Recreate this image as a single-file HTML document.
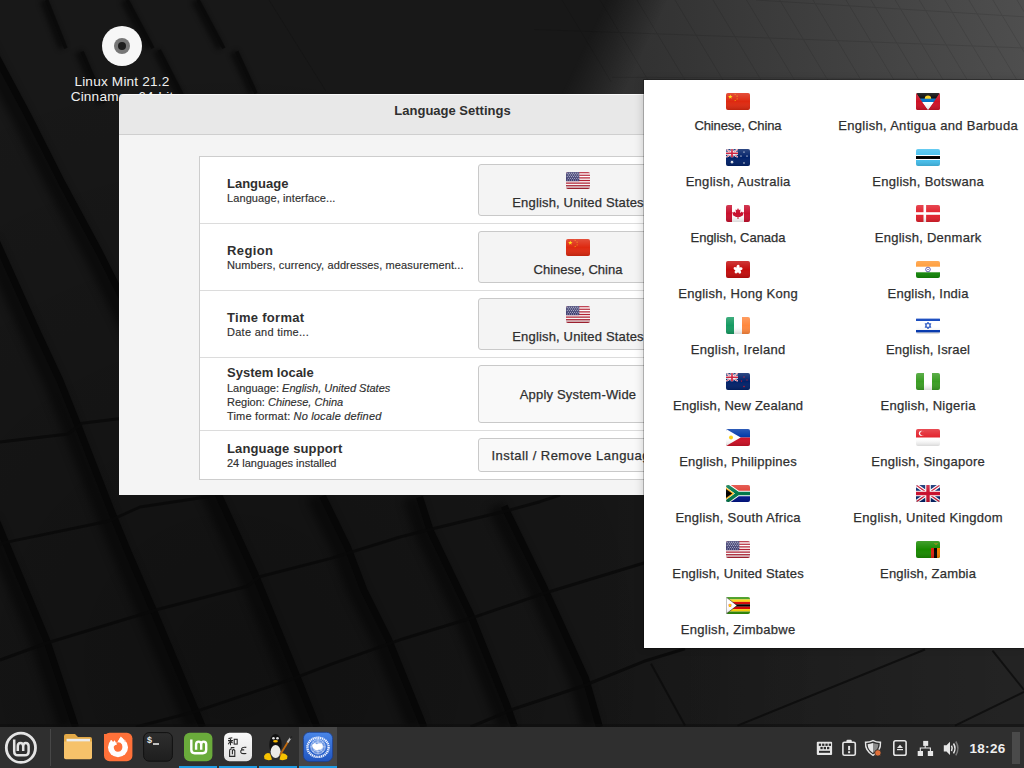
<!DOCTYPE html>
<html><head><meta charset="utf-8">
<style>
*{box-sizing:border-box;margin:0;padding:0}
html,body{width:1024px;height:768px;overflow:hidden;background:#151515;font-family:"Liberation Sans",sans-serif;position:relative}
.abs{position:absolute}
#wall{position:absolute;left:0;top:0;width:1024px;height:768px}
#disc{left:102px;top:26px;width:40px;height:40px;border-radius:50%;background:#f7f7f7}
#disc::before{content:"";position:absolute;left:12px;top:12px;width:16px;height:16px;border-radius:50%;background:#777}
#disc::after{content:"";position:absolute;left:16px;top:16px;width:8px;height:8px;border-radius:50%;background:#1e1e1e}
.dlabel{color:#f0f0f0;font-size:13.6px;letter-spacing:0.2px;line-height:16px;white-space:nowrap;text-align:center;width:140px;left:52px}
#win{left:119px;top:94px;width:667px;height:401px;background:#f4f4f4;border-radius:6px 6px 0 0;overflow:hidden}
#title{left:0;top:0;width:100%;height:41px;background:#e8e8e8;border-bottom:1px solid #cfcfcf;border-top:1px solid #fafafa}
#title span{position:absolute;left:0;width:100%;text-align:center;top:8px;font-weight:bold;font-size:13px;line-height:15px;color:#2f2f2f}
#frame{left:80px;top:62px;width:560px;height:324px;background:#fff;border:1px solid #cdcdcd}
.sep{position:absolute;left:0;width:100%;height:1px;background:#dcdcdc}
.lbl{position:absolute;left:27px;font-weight:bold;font-size:13px;line-height:15px;color:#2f2f2f;white-space:nowrap}
.sub{position:absolute;left:27px;font-size:11px;line-height:13px;color:#2f2f2f;-webkit-text-stroke:0.15px #2f2f2f;white-space:nowrap}
.sub i{font-style:italic}
.btn{position:absolute;left:278px;width:200px;background:#f4f4f4;border:1px solid #c9c9c9;border-radius:3px}
.btn .bt{position:absolute;left:0;width:100%;text-align:center;font-size:13px;line-height:15px;color:#2f2f2f;-webkit-text-stroke:0.25px #2f2f2f;white-space:nowrap}
#popb{left:643px;top:79px;width:382px;height:570px;border:1px solid rgba(0,0,0,0.3);box-shadow:-2px 0 7px rgba(0,0,0,0.12)}
#pop{left:644px;top:80px;width:380px;height:568px;background:#fff;overflow:hidden}
.it{position:absolute;width:190px;height:50px}
.it span{position:absolute;left:0;width:100%;top:25px;font-size:13px;line-height:15px;color:#2f2f2f;-webkit-text-stroke:0.25px #2f2f2f;white-space:nowrap;text-align:center}
#bar{left:0;top:727px;width:1024px;height:41px;background:#2f2f2f}
</style></head><body>
<svg width="0" height="0" style="position:absolute"><defs>
<linearGradient id="shade" x1="0" y1="0" x2="0" y2="1">
<stop offset="0" stop-color="#fff" stop-opacity="0.18"/>
<stop offset="0.5" stop-color="#fff" stop-opacity="0"/>
<stop offset="1" stop-color="#000" stop-opacity="0.15"/>
</linearGradient></defs></svg>
<svg id="wall" width="1024" height="768" viewBox="0 0 1024 768">
<defs>
<linearGradient id="wbase" x1="0" y1="0" x2="1" y2="1"><stop offset="0" stop-color="#171717"/><stop offset="0.5" stop-color="#141414"/><stop offset="1" stop-color="#1f1f1f"/></linearGradient><linearGradient id="wtop" x1="0" y1="0" x2="0" y2="1"><stop offset="0" stop-color="#fff" stop-opacity="0.018"/><stop offset="1" stop-color="#fff" stop-opacity="0"/></linearGradient>
<linearGradient id="wlight" gradientUnits="userSpaceOnUse" x1="560" y1="0" x2="1024" y2="0"><stop offset="0" stop-color="#2c2c2c"/><stop offset="0.3" stop-color="#363636"/><stop offset="1" stop-color="#4e4e4e"/></linearGradient>
<linearGradient id="wmaskg" gradientUnits="userSpaceOnUse" x1="590" y1="34" x2="640" y2="58"><stop offset="0" stop-color="#000"/><stop offset="1" stop-color="#fff"/></linearGradient>
<mask id="wmask"><rect x="0" y="0" width="1024" height="200" fill="url(#wmaskg)"/></mask>
<filter id="blur1"><feGaussianBlur stdDeviation="0.7"/></filter>
<radialGradient id="wdark" gradientUnits="userSpaceOnUse" cx="230" cy="660" r="620"><stop offset="0" stop-color="#000" stop-opacity="0.3"/><stop offset="1" stop-color="#000" stop-opacity="0"/></radialGradient>
<linearGradient id="wright" gradientUnits="userSpaceOnUse" x1="600" y1="0" x2="1024" y2="0"><stop offset="0" stop-color="#fff" stop-opacity="0"/><stop offset="1" stop-color="#fff" stop-opacity="0.05"/></linearGradient>
</defs>
<rect width="1024" height="768" fill="#181818"/>
<rect width="1024" height="768" fill="url(#wdark)"/>
<rect width="1024" height="768" fill="url(#wright)"/>
<rect x="400" y="0" width="624" height="200" fill="url(#wlight)" mask="url(#wmask)"/>
<filter id="blur4" x="-10%" y="-10%" width="120%" height="120%"><feGaussianBlur stdDeviation="4"/></filter>
<g fill="none" stroke="#060606" stroke-linejoin="round" style="filter:blur(4px)" opacity="0.7" transform="translate(-12,0)">
<polyline stroke-width="17" points="0,521 50,640 79,727"/>
<polyline stroke-width="17" points="0,241.6 39.8,330 63.2,380 82,426.8 98.4,469 114.75,511 132,553 158.4,613.9 198.4,709.2 206,727"/>
<polyline stroke-width="17" points="-10,35 0,57 31,114.6 65,182 103,252.5 118.75,283.75 223,497 258.4,574 299.9,675.4 318.3,721.5 320.5,727"/>
<polyline stroke-width="17" points="326,496 351,547 367.3,590 391.9,639.2 426.5,724.8 427,727"/>
<polyline stroke-width="17" points="423,497 433.8,530.8 473.7,613.7 510.5,705.9 518,727"/>
<polyline stroke-width="17" points="507.7,506.3 547.6,587.6 589,678.2 602.9,727"/>
</g>
<filter id="blur2"><feGaussianBlur stdDeviation="1.8"/></filter>
<g fill="none" stroke="#070707" stroke-linejoin="round" style="filter:blur(0.7px)" opacity="1" transform="translate(-3.5,0)">
<polyline stroke-width="7" points="0,521 50,640 79,727"/>
<polyline stroke-width="7" points="0,241.6 39.8,330 63.2,380 82,426.8 98.4,469 114.75,511 132,553 158.4,613.9 198.4,709.2 206,727"/>
<polyline stroke-width="7" points="-10,35 0,57 31,114.6 65,182 103,252.5 118.75,283.75 223,497 258.4,574 299.9,675.4 318.3,721.5 320.5,727"/>
<polyline stroke-width="7" points="326,496 351,547 367.3,590 391.9,639.2 426.5,724.8 427,727"/>
<polyline stroke-width="7" points="423,497 433.8,530.8 473.7,613.7 510.5,705.9 518,727"/>
<polyline stroke-width="7" points="507.7,506.3 547.6,587.6 589,678.2 602.9,727"/>
</g>
<g fill="none" stroke="#070707" style="filter:blur(2.5px)" opacity="0.75" transform="translate(-5,0)">
<polyline stroke-width="8" points="48.3,0 67.7,48.3"/>
<polyline stroke-width="8" points="83.8,51.6 106,103"/>
<polyline stroke-width="8" points="129,0 154.7,48.3"/>
<polyline stroke-width="8" points="161,50 185,96.7"/>
<polyline stroke-width="8" points="199.8,0 225.6,48.3"/>
<polyline stroke-width="8" points="238.5,51.6 257.8,93.5"/>
</g>
<g fill="none" stroke="#0a0a0a" style="filter:blur(0.6px)" opacity="0.9">
<polyline stroke-width="3.5" transform="translate(-1.75,0)" points="48.3,0 67.7,48.3"/>
<polyline stroke-width="3.5" transform="translate(-1.75,0)" points="83.8,51.6 106,103"/>
<polyline stroke-width="3.5" transform="translate(-1.75,0)" points="129,0 154.7,48.3"/>
<polyline stroke-width="3.5" transform="translate(-1.75,0)" points="161,50 185,96.7"/>
<polyline stroke-width="3.5" transform="translate(-1.75,0)" points="199.8,0 225.6,48.3"/>
<polyline stroke-width="3.5" transform="translate(-1.75,0)" points="238.5,51.6 257.8,93.5"/>
<polyline stroke-width="1" opacity="0.25" points="269,0 325.6,90.6"/>
</g>
<g fill="none" stroke="#090909" stroke-linejoin="round" style="filter:blur(0.6px)" opacity="0.8">
<polyline stroke-width="3" points="0,544 9.4,541.6 109,521 140,507 206,497 215,495"/>
<polyline stroke-width="3" points="0,660 46.9,643 158.4,609.3 247.6,586.2 258.4,577 330,558.6 400,537 430.7,529.3 506,511 540,501.7 560,495"/>
<polyline stroke-width="3" points="136,727 198.4,710.7 293.7,678.4 330,664.6 400,639.8 470.6,618.3 547.6,592.2 644,563 660,556"/>
<polyline stroke-width="3" points="470.6,727 513.6,709 583,686 644,661.3 685,648.7"/>
<polyline stroke-width="3" points="0,442 68,433.9 82,423.3 125,418"/>
</g>
<g fill="none" stroke="#0a0a0a" stroke-width="2" opacity="0.75">
<polyline points="737.5,725.6 925,649.5"/>
<polyline points="955,725.6 1024,691.9"/>
<polyline points="651,663.7 685,725.6"/>
<polyline points="992.5,650.6 1024,690"/>
</g>
<g fill="none" stroke="#000" stroke-width="1" opacity="0.1">
<polyline points="534,29.5 690,35 860,41.5 1024,48"/>
<polyline points="612,77.3 800,78 1024,80"/>
<polyline points="756,0 860,6.5 1024,16.8"/>
<line x1="562.0" y1="0" x2="611.2" y2="82"/>
<line x1="600.0" y1="0" x2="649.2" y2="82"/>
<line x1="637.0" y1="0" x2="686.2" y2="82"/>
<line x1="675.0" y1="0" x2="724.2" y2="82"/>
<line x1="713.0" y1="0" x2="762.2" y2="82"/>
<line x1="746.5" y1="0" x2="795.7" y2="82"/>
<line x1="779.7" y1="0" x2="828.9" y2="82"/>
<line x1="813.0" y1="0" x2="862.2" y2="82"/>
<line x1="846.0" y1="0" x2="895.2" y2="82"/>
<line x1="871.0" y1="0" x2="920.2" y2="82"/>
<line x1="895.2" y1="0" x2="944.4" y2="82"/>
<line x1="919.3" y1="0" x2="968.5" y2="82"/>
<line x1="944.9" y1="0" x2="994.1" y2="82"/>
<line x1="968.9" y1="0" x2="1018.1" y2="82"/>
<line x1="992.9" y1="0" x2="1042.1" y2="82"/>
<line x1="1017.0" y1="0" x2="1066.2" y2="82"/>
</g>
<rect x="0" y="724" width="1024" height="3" fill="#0b0b0b" opacity="0.5"/>
</svg>

<div id="disc" class="abs"></div>
<div class="abs dlabel" style="top:74px">Linux Mint 21.2</div>
<div class="abs dlabel" style="top:89px">Cinnamon 64-bit</div>

<div id="win" class="abs">
  <div id="title" class="abs"><span>Language Settings</span></div>
  <div id="frame" class="abs">
    <div class="sep" style="top:66px"></div>
    <div class="sep" style="top:133px"></div>
    <div class="sep" style="top:200px"></div>
    <div class="sep" style="top:273px"></div>

    <div class="lbl" style="top:19px">Language</div>
    <div class="sub" style="top:35px;letter-spacing:0.095px">Language, interface...</div>
    <div class="btn" style="top:7px;height:52px"><svg width="24" height="17" viewBox="0 0 24 17" style="position:absolute;left:87px;top:7px;"><defs><clipPath id="c20"><rect x="0" y="0" width="24" height="17" rx="2"/></clipPath></defs><g clip-path="url(#c20)"><rect width="24" height="17" fill="#fff"/><rect y="0.00" width="24" height="1.31" fill="#b22234"/><rect y="2.62" width="24" height="1.31" fill="#b22234"/><rect y="5.23" width="24" height="1.31" fill="#b22234"/><rect y="7.85" width="24" height="1.31" fill="#b22234"/><rect y="10.46" width="24" height="1.31" fill="#b22234"/><rect y="13.08" width="24" height="1.31" fill="#b22234"/><rect y="15.69" width="24" height="1.31" fill="#b22234"/><rect width="13.3" height="9.2" fill="#3c3b6e"/><rect x="0.80" y="0.80" width="0.9" height="0.9" fill="#c8cce0"/><rect x="2.90" y="0.80" width="0.9" height="0.9" fill="#c8cce0"/><rect x="5.00" y="0.80" width="0.9" height="0.9" fill="#c8cce0"/><rect x="7.10" y="0.80" width="0.9" height="0.9" fill="#c8cce0"/><rect x="9.20" y="0.80" width="0.9" height="0.9" fill="#c8cce0"/><rect x="11.30" y="0.80" width="0.9" height="0.9" fill="#c8cce0"/><rect x="1.85" y="2.50" width="0.9" height="0.9" fill="#c8cce0"/><rect x="3.95" y="2.50" width="0.9" height="0.9" fill="#c8cce0"/><rect x="6.05" y="2.50" width="0.9" height="0.9" fill="#c8cce0"/><rect x="8.15" y="2.50" width="0.9" height="0.9" fill="#c8cce0"/><rect x="10.25" y="2.50" width="0.9" height="0.9" fill="#c8cce0"/><rect x="12.35" y="2.50" width="0.9" height="0.9" fill="#c8cce0"/><rect x="0.80" y="4.20" width="0.9" height="0.9" fill="#c8cce0"/><rect x="2.90" y="4.20" width="0.9" height="0.9" fill="#c8cce0"/><rect x="5.00" y="4.20" width="0.9" height="0.9" fill="#c8cce0"/><rect x="7.10" y="4.20" width="0.9" height="0.9" fill="#c8cce0"/><rect x="9.20" y="4.20" width="0.9" height="0.9" fill="#c8cce0"/><rect x="11.30" y="4.20" width="0.9" height="0.9" fill="#c8cce0"/><rect x="1.85" y="5.90" width="0.9" height="0.9" fill="#c8cce0"/><rect x="3.95" y="5.90" width="0.9" height="0.9" fill="#c8cce0"/><rect x="6.05" y="5.90" width="0.9" height="0.9" fill="#c8cce0"/><rect x="8.15" y="5.90" width="0.9" height="0.9" fill="#c8cce0"/><rect x="10.25" y="5.90" width="0.9" height="0.9" fill="#c8cce0"/><rect x="12.35" y="5.90" width="0.9" height="0.9" fill="#c8cce0"/><rect x="0.80" y="7.60" width="0.9" height="0.9" fill="#c8cce0"/><rect x="2.90" y="7.60" width="0.9" height="0.9" fill="#c8cce0"/><rect x="5.00" y="7.60" width="0.9" height="0.9" fill="#c8cce0"/><rect x="7.10" y="7.60" width="0.9" height="0.9" fill="#c8cce0"/><rect x="9.20" y="7.60" width="0.9" height="0.9" fill="#c8cce0"/><rect x="11.30" y="7.60" width="0.9" height="0.9" fill="#c8cce0"/><rect x="0" y="0" width="24" height="17" fill="url(#shade)"/></g></svg><div class="bt" style="top:30px;letter-spacing:0.16px">English, United States</div></div>

    <div class="lbl" style="top:86px;letter-spacing:0.4px">Region</div>
    <div class="sub" style="top:102px;letter-spacing:0.116px">Numbers, currency, addresses, measurement...</div>
    <div class="btn" style="top:74px;height:52px"><svg width="24" height="17" viewBox="0 0 24 17" style="position:absolute;left:87px;top:7px;"><defs><clipPath id="c21"><rect x="0" y="0" width="24" height="17" rx="2"/></clipPath></defs><g clip-path="url(#c21)"><rect width="24" height="17" fill="#de2910"/><polygon points="4.30,1.50 4.86,3.12 6.58,3.16 5.21,4.20 5.71,5.84 4.30,4.86 2.89,5.84 3.39,4.20 2.02,3.16 3.74,3.12" fill="#ffde00"/><polygon points="9.47,0.65 9.37,1.18 9.83,1.46 9.30,1.52 9.18,2.05 8.95,1.56 8.41,1.61 8.81,1.24 8.60,0.74 9.07,1.00" fill="#ffde00"/><polygon points="11.36,2.40 11.35,2.93 11.85,3.13 11.34,3.28 11.31,3.82 11.00,3.38 10.48,3.52 10.80,3.09 10.51,2.64 11.02,2.81" fill="#ffde00"/><polygon points="11.10,5.15 11.28,5.66 11.81,5.67 11.39,5.99 11.54,6.51 11.10,6.20 10.66,6.51 10.81,5.99 10.39,5.67 10.92,5.66" fill="#ffde00"/><polygon points="8.97,6.86 9.23,7.33 9.76,7.25 9.40,7.64 9.64,8.12 9.15,7.90 8.77,8.27 8.84,7.74 8.36,7.50 8.88,7.39" fill="#ffde00"/><rect x="0" y="0" width="24" height="17" fill="url(#shade)"/></g></svg><div class="bt" style="top:30px">Chinese, China</div></div>

    <div class="lbl" style="top:153px;letter-spacing:0.3px">Time format</div>
    <div class="sub" style="top:169px;letter-spacing:0.27px">Date and time...</div>
    <div class="btn" style="top:141px;height:52px"><svg width="24" height="17" viewBox="0 0 24 17" style="position:absolute;left:87px;top:7px;"><defs><clipPath id="c22"><rect x="0" y="0" width="24" height="17" rx="2"/></clipPath></defs><g clip-path="url(#c22)"><rect width="24" height="17" fill="#fff"/><rect y="0.00" width="24" height="1.31" fill="#b22234"/><rect y="2.62" width="24" height="1.31" fill="#b22234"/><rect y="5.23" width="24" height="1.31" fill="#b22234"/><rect y="7.85" width="24" height="1.31" fill="#b22234"/><rect y="10.46" width="24" height="1.31" fill="#b22234"/><rect y="13.08" width="24" height="1.31" fill="#b22234"/><rect y="15.69" width="24" height="1.31" fill="#b22234"/><rect width="13.3" height="9.2" fill="#3c3b6e"/><rect x="0.80" y="0.80" width="0.9" height="0.9" fill="#c8cce0"/><rect x="2.90" y="0.80" width="0.9" height="0.9" fill="#c8cce0"/><rect x="5.00" y="0.80" width="0.9" height="0.9" fill="#c8cce0"/><rect x="7.10" y="0.80" width="0.9" height="0.9" fill="#c8cce0"/><rect x="9.20" y="0.80" width="0.9" height="0.9" fill="#c8cce0"/><rect x="11.30" y="0.80" width="0.9" height="0.9" fill="#c8cce0"/><rect x="1.85" y="2.50" width="0.9" height="0.9" fill="#c8cce0"/><rect x="3.95" y="2.50" width="0.9" height="0.9" fill="#c8cce0"/><rect x="6.05" y="2.50" width="0.9" height="0.9" fill="#c8cce0"/><rect x="8.15" y="2.50" width="0.9" height="0.9" fill="#c8cce0"/><rect x="10.25" y="2.50" width="0.9" height="0.9" fill="#c8cce0"/><rect x="12.35" y="2.50" width="0.9" height="0.9" fill="#c8cce0"/><rect x="0.80" y="4.20" width="0.9" height="0.9" fill="#c8cce0"/><rect x="2.90" y="4.20" width="0.9" height="0.9" fill="#c8cce0"/><rect x="5.00" y="4.20" width="0.9" height="0.9" fill="#c8cce0"/><rect x="7.10" y="4.20" width="0.9" height="0.9" fill="#c8cce0"/><rect x="9.20" y="4.20" width="0.9" height="0.9" fill="#c8cce0"/><rect x="11.30" y="4.20" width="0.9" height="0.9" fill="#c8cce0"/><rect x="1.85" y="5.90" width="0.9" height="0.9" fill="#c8cce0"/><rect x="3.95" y="5.90" width="0.9" height="0.9" fill="#c8cce0"/><rect x="6.05" y="5.90" width="0.9" height="0.9" fill="#c8cce0"/><rect x="8.15" y="5.90" width="0.9" height="0.9" fill="#c8cce0"/><rect x="10.25" y="5.90" width="0.9" height="0.9" fill="#c8cce0"/><rect x="12.35" y="5.90" width="0.9" height="0.9" fill="#c8cce0"/><rect x="0.80" y="7.60" width="0.9" height="0.9" fill="#c8cce0"/><rect x="2.90" y="7.60" width="0.9" height="0.9" fill="#c8cce0"/><rect x="5.00" y="7.60" width="0.9" height="0.9" fill="#c8cce0"/><rect x="7.10" y="7.60" width="0.9" height="0.9" fill="#c8cce0"/><rect x="9.20" y="7.60" width="0.9" height="0.9" fill="#c8cce0"/><rect x="11.30" y="7.60" width="0.9" height="0.9" fill="#c8cce0"/><rect x="0" y="0" width="24" height="17" fill="url(#shade)"/></g></svg><div class="bt" style="top:30px;letter-spacing:0.16px">English, United States</div></div>

    <div class="lbl" style="top:208px">System locale</div>
    <div class="sub" style="top:225px">Language: <i>English, United States</i></div>
    <div class="sub" style="top:239px">Region: <i>Chinese, China</i></div>
    <div class="sub" style="top:253px;letter-spacing:0.17px">Time format: <i>No locale defined</i></div>
    <div class="btn" style="top:208px;height:58px;background:#f9f9f9"><div class="bt" style="top:21px;letter-spacing:0.18px">Apply System-Wide</div></div>

    <div class="lbl" style="top:284px;letter-spacing:0.13px">Language support</div>
    <div class="sub" style="top:300px">24 languages installed</div>
    <div class="btn" style="top:281px;height:34px;background:#f9f9f9"><div class="bt" style="top:9px;letter-spacing:0.46px">Install / Remove Languages</div></div>
  </div>
</div>

<div id="popb" class="abs"></div>
<div id="pop" class="abs">
<div class="it" style="left:-1px;top:13px"><svg width="24" height="17" viewBox="0 0 24 17" style="position:absolute;left:83px;top:0;"><defs><clipPath id="c1"><rect x="0" y="0" width="24" height="17" rx="2"/></clipPath></defs><g clip-path="url(#c1)"><rect width="24" height="17" fill="#de2910"/><polygon points="4.30,1.50 4.86,3.12 6.58,3.16 5.21,4.20 5.71,5.84 4.30,4.86 2.89,5.84 3.39,4.20 2.02,3.16 3.74,3.12" fill="#ffde00"/><polygon points="9.47,0.65 9.37,1.18 9.83,1.46 9.30,1.52 9.18,2.05 8.95,1.56 8.41,1.61 8.81,1.24 8.60,0.74 9.07,1.00" fill="#ffde00"/><polygon points="11.36,2.40 11.35,2.93 11.85,3.13 11.34,3.28 11.31,3.82 11.00,3.38 10.48,3.52 10.80,3.09 10.51,2.64 11.02,2.81" fill="#ffde00"/><polygon points="11.10,5.15 11.28,5.66 11.81,5.67 11.39,5.99 11.54,6.51 11.10,6.20 10.66,6.51 10.81,5.99 10.39,5.67 10.92,5.66" fill="#ffde00"/><polygon points="8.97,6.86 9.23,7.33 9.76,7.25 9.40,7.64 9.64,8.12 9.15,7.90 8.77,8.27 8.84,7.74 8.36,7.50 8.88,7.39" fill="#ffde00"/><rect x="0" y="0" width="24" height="17" fill="url(#shade)"/></g></svg><span style="letter-spacing:-0.154px;text-indent:-0.154px">Chinese, China</span></div>
<div class="it" style="left:-1px;top:69px"><svg width="24" height="17" viewBox="0 0 24 17" style="position:absolute;left:83px;top:0;"><defs><clipPath id="c2"><rect x="0" y="0" width="24" height="17" rx="2"/></clipPath></defs><g clip-path="url(#c2)"><rect width="24" height="17" fill="#012169"/><svg width="12" height="8.5" viewBox="0 0 24 17"><rect width="24" height="17" fill="#012169"/><path d="M0,0L24,17M24,0L0,17" stroke="#fff" stroke-width="3.6"/><path d="M0,0L24,17M24,0L0,17" stroke="#C8102E" stroke-width="1.3"/><path d="M12.0,0V17M0,8.5H24" stroke="#fff" stroke-width="5.6"/><path d="M12.0,0V17M0,8.5H24" stroke="#C8102E" stroke-width="3.4"/></svg><polygon points="6.00,11.00 6.39,12.19 7.56,11.75 6.88,12.80 7.95,13.45 6.70,13.56 6.87,14.80 6.00,13.90 5.13,14.80 5.30,13.56 4.05,13.45 5.12,12.80 4.44,11.75 5.61,12.19" fill="#fff"/><polygon points="18.00,2.00 18.17,2.64 18.78,2.38 18.39,2.91 18.97,3.22 18.31,3.25 18.43,3.90 18.00,3.40 17.57,3.90 17.69,3.25 17.03,3.22 17.61,2.91 17.22,2.38 17.83,2.64" fill="#fff"/><polygon points="15.00,6.00 15.17,6.64 15.78,6.38 15.39,6.91 15.97,7.22 15.31,7.25 15.43,7.90 15.00,7.40 14.57,7.90 14.69,7.25 14.03,7.22 14.61,6.91 14.22,6.38 14.83,6.64" fill="#fff"/><polygon points="21.00,6.00 21.17,6.64 21.78,6.38 21.39,6.91 21.97,7.22 21.31,7.25 21.43,7.90 21.00,7.40 20.57,7.90 20.69,7.25 20.03,7.22 20.61,6.91 20.22,6.38 20.83,6.64" fill="#fff"/><polygon points="18.00,12.90 18.19,13.60 18.86,13.31 18.43,13.90 19.07,14.24 18.34,14.27 18.48,14.99 18.00,14.44 17.52,14.99 17.66,14.27 16.93,14.24 17.57,13.90 17.14,13.31 17.81,13.60" fill="#fff"/><rect x="0" y="0" width="24" height="17" fill="url(#shade)"/></g></svg><span style="letter-spacing:0.294px;text-indent:0.294px">English, Australia</span></div>
<div class="it" style="left:-1px;top:125px"><svg width="24" height="17" viewBox="0 0 24 17" style="position:absolute;left:83px;top:0;"><defs><clipPath id="c3"><rect x="0" y="0" width="24" height="17" rx="2"/></clipPath></defs><g clip-path="url(#c3)"><rect width="24" height="17" fill="#fff"/><rect width="6" height="17" fill="#c8102e"/><rect x="18" width="6" height="17" fill="#c8102e"/><path d="M12,3 L13,5 L14.5,4.5 L14,8 L16,6.5 L16.5,7.5 L18,7.3 L17,9.5 L17.5,10 L14,12 L12.5,12 L12.5,14 L11.5,14 L11.5,12 L10,12 L6.5,10 L7,9.5 L6,7.3 L7.5,7.5 L8,6.5 L10,8 L9.5,4.5 L11,5 Z" fill="#c8102e"/><rect x="0" y="0" width="24" height="17" fill="url(#shade)"/></g></svg><span style="letter-spacing:-0.036px;text-indent:-0.036px">English, Canada</span></div>
<div class="it" style="left:-1px;top:181px"><svg width="24" height="17" viewBox="0 0 24 17" style="position:absolute;left:83px;top:0;"><defs><clipPath id="c4"><rect x="0" y="0" width="24" height="17" rx="2"/></clipPath></defs><g clip-path="url(#c4)"><rect width="24" height="17" fill="#c40d0d"/><ellipse cx="12.00" cy="6.20" rx="1.6" ry="2.4" transform="rotate(10 12.00 6.20)" fill="#fff"/><ellipse cx="14.19" cy="7.79" rx="1.6" ry="2.4" transform="rotate(82 14.19 7.79)" fill="#fff"/><ellipse cx="13.35" cy="10.36" rx="1.6" ry="2.4" transform="rotate(154 13.35 10.36)" fill="#fff"/><ellipse cx="10.65" cy="10.36" rx="1.6" ry="2.4" transform="rotate(226 10.65 10.36)" fill="#fff"/><ellipse cx="9.81" cy="7.79" rx="1.6" ry="2.4" transform="rotate(298 9.81 7.79)" fill="#fff"/><rect x="0" y="0" width="24" height="17" fill="url(#shade)"/></g></svg><span style="letter-spacing:0.276px;text-indent:0.276px">English, Hong Kong</span></div>
<div class="it" style="left:-1px;top:237px"><svg width="24" height="17" viewBox="0 0 24 17" style="position:absolute;left:83px;top:0;"><defs><clipPath id="c5"><rect x="0" y="0" width="24" height="17" rx="2"/></clipPath></defs><g clip-path="url(#c5)"><rect width="24" height="17" fill="#fff"/><rect width="8" height="17" fill="#169b62"/><rect x="16" width="8" height="17" fill="#ff883e"/><rect x="0" y="0" width="24" height="17" fill="url(#shade)"/></g></svg><span style="letter-spacing:0.333px;text-indent:0.333px">English, Ireland</span></div>
<div class="it" style="left:-1px;top:293px"><svg width="24" height="17" viewBox="0 0 24 17" style="position:absolute;left:83px;top:0;"><defs><clipPath id="c6"><rect x="0" y="0" width="24" height="17" rx="2"/></clipPath></defs><g clip-path="url(#c6)"><rect width="24" height="17" fill="#012169"/><svg width="12" height="8.5" viewBox="0 0 24 17"><rect width="24" height="17" fill="#012169"/><path d="M0,0L24,17M24,0L0,17" stroke="#fff" stroke-width="3.6"/><path d="M0,0L24,17M24,0L0,17" stroke="#C8102E" stroke-width="1.3"/><path d="M12.0,0V17M0,8.5H24" stroke="#fff" stroke-width="5.6"/><path d="M12.0,0V17M0,8.5H24" stroke="#C8102E" stroke-width="3.4"/></svg><polygon points="18.00,2.90 18.26,3.64 19.05,3.66 18.42,4.14 18.65,4.89 18.00,4.44 17.35,4.89 17.58,4.14 16.95,3.66 17.74,3.64" fill="#cc142b"/><polygon points="15.50,6.90 15.76,7.64 16.55,7.66 15.92,8.14 16.15,8.89 15.50,8.44 14.85,8.89 15.08,8.14 14.45,7.66 15.24,7.64" fill="#cc142b"/><polygon points="21.00,6.00 21.24,6.68 21.95,6.69 21.38,7.12 21.59,7.81 21.00,7.40 20.41,7.81 20.62,7.12 20.05,6.69 20.76,6.68" fill="#cc142b"/><polygon points="18.00,12.30 18.28,13.11 19.14,13.13 18.46,13.65 18.71,14.47 18.00,13.98 17.29,14.47 17.54,13.65 16.86,13.13 17.72,13.11" fill="#cc142b"/><rect x="0" y="0" width="24" height="17" fill="url(#shade)"/></g></svg><span style="letter-spacing:0.195px;text-indent:0.195px">English, New Zealand</span></div>
<div class="it" style="left:-1px;top:349px"><svg width="24" height="17" viewBox="0 0 24 17" style="position:absolute;left:83px;top:0;"><defs><clipPath id="c7"><rect x="0" y="0" width="24" height="17" rx="2"/></clipPath></defs><g clip-path="url(#c7)"><rect width="24" height="8.5" fill="#0038a8"/><rect y="8.5" width="24" height="8.5" fill="#ce1126"/><polygon points="0,0 14.7,8.5 0,17" fill="#fff"/><circle cx="5" cy="8.5" r="2" fill="#fcd116"/><rect x="0" y="0" width="24" height="17" fill="url(#shade)"/></g></svg><span style="letter-spacing:0.263px;text-indent:0.263px">English, Philippines</span></div>
<div class="it" style="left:-1px;top:405px"><svg width="24" height="17" viewBox="0 0 24 17" style="position:absolute;left:83px;top:0;"><defs><clipPath id="c8"><rect x="0" y="0" width="24" height="17" rx="2"/></clipPath></defs><g clip-path="url(#c8)"><rect width="24" height="8.5" fill="#e03c31"/><rect y="8.5" width="24" height="8.5" fill="#001489"/><path d="M0,0 L12,8.5 L24,8.5 M0,17 L12,8.5" stroke="#fff" stroke-width="5.5" fill="none"/><path d="M0,0 L12,8.5 L24,8.5 M0,17 L12,8.5" stroke="#007749" stroke-width="3.4" fill="none"/><polygon points="0,2.5 8.2,8.5 0,14.5" fill="#ffb81c"/><polygon points="0,4 6.2,8.5 0,13" fill="#000"/><rect x="0" y="0" width="24" height="17" fill="url(#shade)"/></g></svg><span style="letter-spacing:0.260px;text-indent:0.260px">English, South Africa</span></div>
<div class="it" style="left:-1px;top:461px"><svg width="24" height="17" viewBox="0 0 24 17" style="position:absolute;left:83px;top:0;"><defs><clipPath id="c9"><rect x="0" y="0" width="24" height="17" rx="2"/></clipPath></defs><g clip-path="url(#c9)"><rect width="24" height="17" fill="#fff"/><rect y="0.00" width="24" height="1.31" fill="#b22234"/><rect y="2.62" width="24" height="1.31" fill="#b22234"/><rect y="5.23" width="24" height="1.31" fill="#b22234"/><rect y="7.85" width="24" height="1.31" fill="#b22234"/><rect y="10.46" width="24" height="1.31" fill="#b22234"/><rect y="13.08" width="24" height="1.31" fill="#b22234"/><rect y="15.69" width="24" height="1.31" fill="#b22234"/><rect width="13.3" height="9.2" fill="#3c3b6e"/><rect x="0.80" y="0.80" width="0.9" height="0.9" fill="#c8cce0"/><rect x="2.90" y="0.80" width="0.9" height="0.9" fill="#c8cce0"/><rect x="5.00" y="0.80" width="0.9" height="0.9" fill="#c8cce0"/><rect x="7.10" y="0.80" width="0.9" height="0.9" fill="#c8cce0"/><rect x="9.20" y="0.80" width="0.9" height="0.9" fill="#c8cce0"/><rect x="11.30" y="0.80" width="0.9" height="0.9" fill="#c8cce0"/><rect x="1.85" y="2.50" width="0.9" height="0.9" fill="#c8cce0"/><rect x="3.95" y="2.50" width="0.9" height="0.9" fill="#c8cce0"/><rect x="6.05" y="2.50" width="0.9" height="0.9" fill="#c8cce0"/><rect x="8.15" y="2.50" width="0.9" height="0.9" fill="#c8cce0"/><rect x="10.25" y="2.50" width="0.9" height="0.9" fill="#c8cce0"/><rect x="12.35" y="2.50" width="0.9" height="0.9" fill="#c8cce0"/><rect x="0.80" y="4.20" width="0.9" height="0.9" fill="#c8cce0"/><rect x="2.90" y="4.20" width="0.9" height="0.9" fill="#c8cce0"/><rect x="5.00" y="4.20" width="0.9" height="0.9" fill="#c8cce0"/><rect x="7.10" y="4.20" width="0.9" height="0.9" fill="#c8cce0"/><rect x="9.20" y="4.20" width="0.9" height="0.9" fill="#c8cce0"/><rect x="11.30" y="4.20" width="0.9" height="0.9" fill="#c8cce0"/><rect x="1.85" y="5.90" width="0.9" height="0.9" fill="#c8cce0"/><rect x="3.95" y="5.90" width="0.9" height="0.9" fill="#c8cce0"/><rect x="6.05" y="5.90" width="0.9" height="0.9" fill="#c8cce0"/><rect x="8.15" y="5.90" width="0.9" height="0.9" fill="#c8cce0"/><rect x="10.25" y="5.90" width="0.9" height="0.9" fill="#c8cce0"/><rect x="12.35" y="5.90" width="0.9" height="0.9" fill="#c8cce0"/><rect x="0.80" y="7.60" width="0.9" height="0.9" fill="#c8cce0"/><rect x="2.90" y="7.60" width="0.9" height="0.9" fill="#c8cce0"/><rect x="5.00" y="7.60" width="0.9" height="0.9" fill="#c8cce0"/><rect x="7.10" y="7.60" width="0.9" height="0.9" fill="#c8cce0"/><rect x="9.20" y="7.60" width="0.9" height="0.9" fill="#c8cce0"/><rect x="11.30" y="7.60" width="0.9" height="0.9" fill="#c8cce0"/><rect x="0" y="0" width="24" height="17" fill="url(#shade)"/></g></svg><span style="letter-spacing:0.162px;text-indent:0.162px">English, United States</span></div>
<div class="it" style="left:-1px;top:517px"><svg width="24" height="17" viewBox="0 0 24 17" style="position:absolute;left:83px;top:0;"><defs><clipPath id="c10"><rect x="0" y="0" width="24" height="17" rx="2"/></clipPath></defs><g clip-path="url(#c10)"><rect width="24" height="17" fill="#fff"/><rect y="0.00" width="24" height="2.48" fill="#319208"/><rect y="2.43" width="24" height="2.48" fill="#ffd200"/><rect y="4.86" width="24" height="2.48" fill="#d40000"/><rect y="7.29" width="24" height="2.48" fill="#000"/><rect y="9.71" width="24" height="2.48" fill="#d40000"/><rect y="12.14" width="24" height="2.48" fill="#ffd200"/><rect y="14.57" width="24" height="2.48" fill="#319208"/><polygon points="0,0 11,8.5 0,17" fill="#fff" stroke="#000" stroke-width="0.5"/><polygon points="4.00,6.20 4.54,7.76 6.19,7.79 4.87,8.78 5.35,10.36 4.00,9.42 2.65,10.36 3.13,8.78 1.81,7.79 3.46,7.76" fill="#d40000"/><rect x="3" y="7.3" width="2" height="2.5" fill="#ffd200"/><rect x="0" y="0" width="24" height="17" fill="url(#shade)"/></g></svg><span style="letter-spacing:0.294px;text-indent:0.294px">English, Zimbabwe</span></div>
<div class="it" style="left:189px;top:13px"><svg width="24" height="17" viewBox="0 0 24 17" style="position:absolute;left:83px;top:0;"><defs><clipPath id="c11"><rect x="0" y="0" width="24" height="17" rx="2"/></clipPath></defs><g clip-path="url(#c11)"><rect width="24" height="17" fill="#ce1126"/><polygon points="0,0 24,0 12,17" fill="#000"/><polygon points="4,5.7 20,5.7 12,17" fill="#0072c6"/><polygon points="6.3,9 17.7,9 12,17" fill="#fff"/><circle cx="12" cy="5.7" r="3.2" fill="#fcd116"/><rect x="0" y="5.7" width="24" height="3.3" fill="#0072c6"/><polygon points="0,0 12,17 0,17" fill="#ce1126"/><polygon points="24,0 12,17 24,17" fill="#ce1126"/><polygon points="6.3,9 17.7,9 12,17" fill="#fff"/><rect x="0" y="0" width="24" height="17" fill="url(#shade)"/></g></svg><span style="letter-spacing:0.296px;text-indent:0.296px">English, Antigua and Barbuda</span></div>
<div class="it" style="left:189px;top:69px"><svg width="24" height="17" viewBox="0 0 24 17" style="position:absolute;left:83px;top:0;"><defs><clipPath id="c12"><rect x="0" y="0" width="24" height="17" rx="2"/></clipPath></defs><g clip-path="url(#c12)"><rect width="24" height="17" fill="#45c0ee"/><rect y="6" width="24" height="5" fill="#fff"/><rect y="7" width="24" height="3" fill="#000"/><rect x="0" y="0" width="24" height="17" fill="url(#shade)"/></g></svg><span style="letter-spacing:0.281px;text-indent:0.281px">English, Botswana</span></div>
<div class="it" style="left:189px;top:125px"><svg width="24" height="17" viewBox="0 0 24 17" style="position:absolute;left:83px;top:0;"><defs><clipPath id="c13"><rect x="0" y="0" width="24" height="17" rx="2"/></clipPath></defs><g clip-path="url(#c13)"><rect width="24" height="17" fill="#e2202c"/><rect x="7.5" width="2.6" height="17" fill="#fff"/><rect y="7.2" width="24" height="2.6" fill="#fff"/><rect x="0" y="0" width="24" height="17" fill="url(#shade)"/></g></svg><span style="letter-spacing:0.260px;text-indent:0.260px">English, Denmark</span></div>
<div class="it" style="left:189px;top:181px"><svg width="24" height="17" viewBox="0 0 24 17" style="position:absolute;left:83px;top:0;"><defs><clipPath id="c14"><rect x="0" y="0" width="24" height="17" rx="2"/></clipPath></defs><g clip-path="url(#c14)"><rect width="24" height="17" fill="#fff"/><rect width="24" height="5.7" fill="#ff9933"/><rect y="11.3" width="24" height="5.7" fill="#138808"/><circle cx="12" cy="8.5" r="2.3" fill="none" stroke="#000080" stroke-width="0.6"/><circle cx="12" cy="8.5" r="0.6" fill="#000080"/><rect x="0" y="0" width="24" height="17" fill="url(#shade)"/></g></svg><span style="letter-spacing:0.208px;text-indent:0.208px">English, India</span></div>
<div class="it" style="left:189px;top:237px"><svg width="24" height="17" viewBox="0 0 24 17" style="position:absolute;left:83px;top:0;"><defs><clipPath id="c15"><rect x="0" y="0" width="24" height="17" rx="2"/></clipPath></defs><g clip-path="url(#c15)"><rect width="24" height="17" fill="#fff"/><rect y="1.6" width="24" height="2.4" fill="#0038b8"/><rect y="13" width="24" height="2.4" fill="#0038b8"/><polygon points="12,5 15,10.3 9,10.3" fill="none" stroke="#0038b8" stroke-width="0.7"/><polygon points="12,12 15,6.7 9,6.7" fill="none" stroke="#0038b8" stroke-width="0.7"/><rect x="0" y="0" width="24" height="17" fill="url(#shade)"/></g></svg><span style="letter-spacing:0.171px;text-indent:0.171px">English, Israel</span></div>
<div class="it" style="left:189px;top:293px"><svg width="24" height="17" viewBox="0 0 24 17" style="position:absolute;left:83px;top:0;"><defs><clipPath id="c16"><rect x="0" y="0" width="24" height="17" rx="2"/></clipPath></defs><g clip-path="url(#c16)"><rect width="24" height="17" fill="#fff"/><rect width="8" height="17" fill="#3a9d23"/><rect x="16" width="8" height="17" fill="#3a9d23"/><rect x="0" y="0" width="24" height="17" fill="url(#shade)"/></g></svg><span style="letter-spacing:0.253px;text-indent:0.253px">English, Nigeria</span></div>
<div class="it" style="left:189px;top:349px"><svg width="24" height="17" viewBox="0 0 24 17" style="position:absolute;left:83px;top:0;"><defs><clipPath id="c17"><rect x="0" y="0" width="24" height="17" rx="2"/></clipPath></defs><g clip-path="url(#c17)"><rect width="24" height="17" fill="#fff"/><rect width="24" height="8.5" fill="#e3242e"/><circle cx="5.5" cy="4.3" r="2.6" fill="#fff"/><circle cx="6.6" cy="4.3" r="2.4" fill="#e3242e"/><rect x="0" y="0" width="24" height="17" fill="url(#shade)"/></g></svg><span style="letter-spacing:0.253px;text-indent:0.253px">English, Singapore</span></div>
<div class="it" style="left:189px;top:405px"><svg width="24" height="17" viewBox="0 0 24 17" style="position:absolute;left:83px;top:0;"><defs><clipPath id="c18"><rect x="0" y="0" width="24" height="17" rx="2"/></clipPath></defs><g clip-path="url(#c18)"><rect width="24" height="17" fill="#012169"/><path d="M0,0L24,17M24,0L0,17" stroke="#fff" stroke-width="3.6"/><path d="M0,0L24,17M24,0L0,17" stroke="#C8102E" stroke-width="1.3"/><path d="M12.0,0V17M0,8.5H24" stroke="#fff" stroke-width="5.6"/><path d="M12.0,0V17M0,8.5H24" stroke="#C8102E" stroke-width="3.4"/><rect x="0" y="0" width="24" height="17" fill="url(#shade)"/></g></svg><span style="letter-spacing:0.318px;text-indent:0.318px">English, United Kingdom</span></div>
<div class="it" style="left:189px;top:461px"><svg width="24" height="17" viewBox="0 0 24 17" style="position:absolute;left:83px;top:0;"><defs><clipPath id="c19"><rect x="0" y="0" width="24" height="17" rx="2"/></clipPath></defs><g clip-path="url(#c19)"><rect width="24" height="17" fill="#198a00"/><rect x="15" y="7" width="3" height="10" fill="#de2010"/><rect x="18" y="7" width="3" height="10" fill="#000"/><rect x="21" y="7" width="3" height="10" fill="#ef7d00"/><path d="M18,2 Q20,3.5 22,2 Q20,5 18,2" fill="#ef7d00"/><rect x="0" y="0" width="24" height="17" fill="url(#shade)"/></g></svg><span style="letter-spacing:0.186px;text-indent:0.186px">English, Zambia</span></div>

</div>

<div id="bar" class="abs">
<svg width="1024" height="41" viewBox="0 727 1024 41" style="position:absolute;left:0;top:0">
<defs>
<linearGradient id="gUN" x1="0" y1="0" x2="0" y2="1"><stop offset="0" stop-color="#4a86e8"/><stop offset="1" stop-color="#1f55c0"/></linearGradient>
<linearGradient id="gLang" x1="0" y1="0" x2="0" y2="1"><stop offset="0" stop-color="#fafafa"/><stop offset="1" stop-color="#e2e2e2"/></linearGradient>
<linearGradient id="gTerm" x1="0" y1="0" x2="0" y2="1"><stop offset="0" stop-color="#2e2e2e"/><stop offset="1" stop-color="#1e1e1e"/></linearGradient>
</defs>
<!-- active slot -->
<rect x="299" y="727" width="38" height="39" fill="#464646"/>
<!-- underlines -->
<rect x="179" y="766" width="38" height="2" fill="#1f9ce4"/>
<rect x="219" y="766" width="38" height="2" fill="#1f9ce4"/>
<rect x="259" y="766" width="38" height="2" fill="#1f9ce4"/>
<rect x="299" y="766" width="38" height="2" fill="#1f9ce4"/>
<!-- mint menu -->
<circle cx="20.9" cy="747.8" r="14.6" fill="none" stroke="#e4e4e4" stroke-width="2.8"/>
<path d="M14.2,739.5 V751.5 Q14.2,755.3 18,755.3 H24.8 Q28.6,755.3 28.6,751.5 V746.3 Q28.6,743 25.7,743 Q23.2,743 23.2,746.3 V751 M23.2,746.3 Q23.2,743 20.4,743 Q17.8,743 17.8,746.3 V751" fill="none" stroke="#e4e4e4" stroke-width="2.5"/>
<rect x="50" y="729" width="1" height="37" fill="#474747"/>
<!-- folder -->
<path d="M64,736 Q64,734 66,734 H75 L78,737 H90 Q92,737 92,739 V742 H64 Z" fill="#e3a947"/>
<rect x="66.5" y="738.8" width="23.5" height="3" fill="#ececec"/>
<path d="M64,741.5 H92 V757.5 Q92,759.3 90.2,759.3 H65.8 Q64,759.3 64,757.5 Z" fill="#f6c26a"/>
<!-- firefox -->
<rect x="104" y="732.8" width="28.4" height="28.4" rx="5.5" fill="#ff7139"/>
<circle cx="118" cy="747.3" r="10" fill="#fff"/>
<path d="M111.5,739.9 L113.1,741.9 L114.6,740.3 L116,742.8 L117.9,741.4 L120.8,736.6 L120.8,734 L104,734 L104,739.9 Z" fill="#ff7139"/>
<path d="M117.9,741.4 L120.8,736.6 L123.2,738.8 Z" fill="#fff"/>
<path d="M124.2,740.4 L125,741.8 L126.2,740.8 Z" fill="#ff7139"/>
<path d="M113.8,746.5 Q114.6,744.6 117,744.4 L116.2,742.4 Q120.5,741.5 122,744.5 Q122.8,747 122,749.2 Q120.6,751.9 117.8,751.8 Q114.5,751.5 113.8,748 Z" fill="#ff7139"/>
<!-- terminal -->
<rect x="143.6" y="732.6" width="28.8" height="28.6" rx="5.5" fill="url(#gTerm)" stroke="#111" stroke-width="1"/>
<text x="147" y="742.6" font-family="Liberation Sans" font-weight="bold" font-size="9" fill="#e6e6e6">$</text>
<rect x="153" y="743.2" width="6" height="1.6" fill="#e6e6e6"/>
<!-- mint green -->
<rect x="184" y="732.7" width="28.4" height="28.5" rx="5.8" fill="#6aab3b"/>
<path d="M191.3,739.6 V749.8 Q191.3,753.2 194.7,753.2 H202.8 Q206.2,753.2 206.2,749.8 V744.5 Q206.2,741.6 203.6,741.6 Q201.2,741.6 201.2,744.5 V749.8 M201.2,744.5 Q201.2,741.6 198.6,741.6 Q196.1,741.6 196.1,744.5 V749.8" fill="none" stroke="#fff" stroke-width="2.4"/>
<!-- language -->
<rect x="224" y="732.7" width="28" height="28.5" rx="5.5" fill="url(#gLang)"/>
<g fill="none" stroke="#2a2a2a" stroke-width="1.1">
<path d="M228.4,738.6 L232.3,737.7 M228,740.6 H233 M230.5,738.2 V745.2 M230.5,741 L228.2,744.3 M230.5,741.2 L232.6,743.2"/>
<rect x="234.2" y="739.3" width="3" height="4.8"/>
<path d="M229.6,750.3 V756.4 H234.8 V750.6 Q233.6,748.8 232.4,750.4 V754.2 M229.6,750.3 Q230.2,748.6 231.7,749.3 M230.8,747.6 H234.4"/>
<path d="M246.3,747.4 Q241.2,746.6 241.6,749.9 Q240.2,750.6 240.9,752.4 Q241.7,754.1 246.3,753.5 M241.6,749.9 H244.2"/>
</g>
<!-- tux -->
<ellipse cx="275.5" cy="745" rx="6.2" ry="11" fill="#111"/>
<ellipse cx="275.6" cy="751.5" rx="5" ry="6.5" fill="#ecebe6"/>
<ellipse cx="275.5" cy="741.2" rx="2.4" ry="1.3" fill="#f5b800"/>
<circle cx="273.5" cy="738.2" r="1.3" fill="#ddd"/><circle cx="277.5" cy="738.2" r="1.3" fill="#ddd"/>
<path d="M264,756 Q266,752 270,753.5 L272,759.5 Q268,761 264.5,759 Z" fill="#f7c200"/>
<path d="M287.5,756 Q285,752.5 281,753.5 L279.5,759.5 Q283,761 287,759 Z" fill="#f7c200"/>
<path d="M280,755 L288.5,741" stroke="#c06a10" stroke-width="1.8"/>
<path d="M287.5,742.5 L290.5,738" stroke="#bbb" stroke-width="2"/>
<path d="M290,738.5 L292,736.5" stroke="#222" stroke-width="1.5"/>
<!-- UN -->
<rect x="303.4" y="732.3" width="29.2" height="29.3" rx="6" fill="url(#gUN)" stroke="#1a3f90" stroke-width="0.8"/>
<ellipse cx="318" cy="747.3" rx="10.6" ry="9.6" fill="none" stroke="#f2f5ff" stroke-width="2.4" stroke-dasharray="1.3 0.6"/>
<circle cx="318" cy="746.8" r="7.3" fill="#fff" fill-opacity="0.28"/>
<g stroke="#e8eeff" stroke-width="0.55" fill="none">
<circle cx="318" cy="746.8" r="7.3"/><circle cx="318" cy="746.8" r="4.8"/><circle cx="318" cy="746.8" r="2.4"/>
<path d="M310.7,746.8 H325.3 M318,739.5 V754.1 M312.8,741.6 L323.2,752 M323.2,741.6 L312.8,752"/>
</g>
<path d="M312,745 Q314.5,742 317,744.5 Q318.5,742.5 321,743.5 Q323.5,745 322.5,748 Q320.5,750.5 318.5,749.5 Q317,751.5 315,749.5 Q312.5,748.5 312,745 Z" fill="#fff"/>
<!-- tray -->
<rect x="816.8" y="741.8" width="15.3" height="13.2" rx="1" fill="#e6e6e6"/>
<g fill="#2c2c2c">
<rect x="818.8" y="743.6" width="2.3" height="2.3"/><rect x="822.1" y="743.6" width="2.3" height="2.3"/><rect x="825.4" y="743.6" width="2.3" height="2.3"/><rect x="828.7" y="743.6" width="2.3" height="2.3"/>
<rect x="820.4" y="746.9" width="2.3" height="2.3"/><rect x="823.7" y="746.9" width="2.3" height="2.3"/><rect x="827" y="746.9" width="2.3" height="2.3"/>
<rect x="819" y="750.8" width="11" height="2"/>
</g>
<rect x="842.9" y="742.2" width="12.4" height="13.1" rx="1.6" fill="none" stroke="#e6e6e6" stroke-width="1.6"/>
<rect x="846.4" y="739.8" width="5.4" height="3" rx="1.2" fill="#e6e6e6"/>
<rect x="848.1" y="745.9" width="2" height="4.3" fill="#e6e6e6"/><rect x="848.1" y="751.2" width="2" height="2" fill="#e6e6e6"/>
<path d="M873,740.6 Q869,742.5 865.5,742.3 Q865,751 873,755.3 Q881,751 880.5,742.3 Q877,742.5 873,740.6 Z" fill="none" stroke="#e6e6e6" stroke-width="1.4"/>
<path d="M873,743 Q870,744 867.6,744.2 Q867.8,750 873,753 Z" fill="#e6e6e6"/>
<path d="M873,743 Q876,744 878.4,744.2 Q878.2,750 873,753 Z" fill="#8a8a8a"/>
<circle cx="877.9" cy="752.9" r="3.2" fill="#e0703a" stroke="#2c2c2c" stroke-width="0.8"/>
<rect x="893.8" y="740.7" width="12.3" height="14.6" rx="1.8" fill="none" stroke="#e6e6e6" stroke-width="1.6"/>
<path d="M897,748 L900,744.8 L903,748 Z" fill="#e6e6e6"/><rect x="897" y="749" width="6" height="1.2" fill="#e6e6e6"/>
<g fill="#e6e6e6">
<rect x="923.2" y="740.9" width="5" height="5"/>
<rect x="917.7" y="751" width="5.3" height="5"/><rect x="927.8" y="751" width="5.3" height="5"/>
<path d="M925.2,745.5 V748" stroke="#e6e6e6" stroke-width="1.1"/>
<path d="M920.3,751 V748 H930.4 V751" fill="none" stroke="#e6e6e6" stroke-width="1.1"/>
</g>
<path d="M943.8,745.3 H946.5 L950,741.8 V755 L946.5,751.5 H943.8 Z" fill="#e6e6e6"/>
<path d="M951.5,745.6 Q953,748.4 951.5,751.2" fill="none" stroke="#e6e6e6" stroke-width="1.5"/>
<path d="M953.5,743.5 Q956.5,748.4 953.5,753.3" fill="none" stroke="#e6e6e6" stroke-width="1.5"/>
<path d="M955.8,741.5 Q960,748.4 955.8,755.3" fill="none" stroke="#7a7a7a" stroke-width="1.5"/>
<text x="969.5" y="753" font-family="Liberation Sans" font-weight="bold" font-size="13.5" letter-spacing="0.3" fill="#eeeeee">18:26</text>
<rect x="1012" y="732" width="8" height="32" fill="#4a4a4a"/>
</svg>
</div>
</body></html>
